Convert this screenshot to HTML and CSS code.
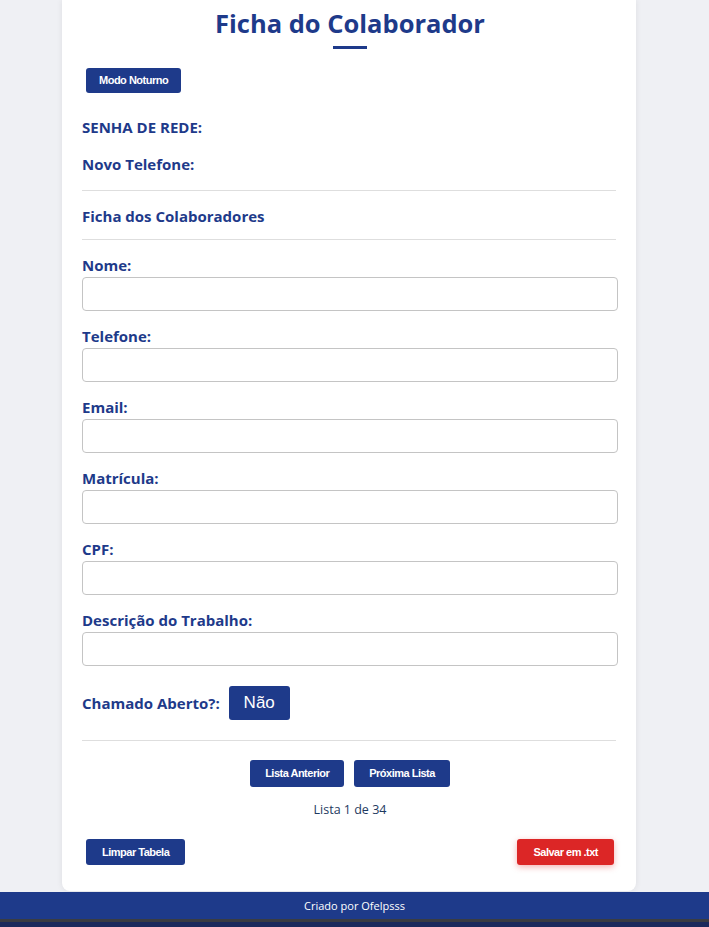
FILE: index.html
```html
<!DOCTYPE html>
<html lang="pt-BR">
<head>
<meta charset="utf-8">
<title>Ficha do Colaborador</title>
<link rel="stylesheet" href="styles.css">
</head>
<body>
<main class="card">
  <h1 class="title">Ficha do Colaborador</h1>
  <div class="title-bar"></div>
  <div class="top-actions">
    <button class="btn btn-small">Modo Noturno</button>
  </div>
  <p class="info">SENHA DE REDE:</p>
  <p class="info info-phone">Novo Telefone:</p>
  <hr class="divider">
  <h2 class="section">Ficha dos Colaboradores</h2>
  <hr class="divider divider-tight">
  <form class="form">
    <div class="field"><label>Nome:</label><input type="text"></div>
    <div class="field"><label>Telefone:</label><input type="text"></div>
    <div class="field"><label>Email:</label><input type="text"></div>
    <div class="field"><label>Matrícula:</label><input type="text"></div>
    <div class="field"><label>CPF:</label><input type="text"></div>
    <div class="field"><label>Descrição do Trabalho:</label><input type="text"></div>
    <div class="status">
      <span class="status-label">Chamado Aberto?:</span>
      <button type="button" class="btn btn-toggle">Não</button>
    </div>
  </form>
  <hr class="divider divider-bottom">
  <div class="pager">
    <button class="btn btn-page">Lista Anterior</button>
    <button class="btn btn-page">Próxima Lista</button>
  </div>
  <p class="pager-info">Lista 1 de 34</p>
  <div class="bottom-actions">
    <button class="btn btn-small btn-wide">Limpar Tabela</button>
    <button class="btn btn-small btn-red">Salvar em .txt</button>
  </div>
</main>
<footer class="footer">Criado por Ofelpsss</footer>
<div class="footer-strip"></div>
</body>
</html>
```
FILE: styles.css
```css
* { box-sizing: border-box; }
html, body { margin: 0; padding: 0; }
body {
  background: #eff0f4;
  font-family: "Open Sans", "Noto Sans", sans-serif;
  color: #1e3a8a;
}
.card {
  width: 574px;
  margin-left: 62px;
  background: #fff;
  border-radius: 0 0 8px 8px;
  box-shadow: 0 0 6px rgba(0,0,0,0.08);
  padding: 3px 18px 26px 20px;
}
.title {
  margin: 0;
  text-align: center;
  font-size: 25.5px;
  font-weight: 700;
  line-height: 40px;
  color: #1e3a8a;
}
.title-bar {
  width: 34px;
  height: 3px;
  background: #1e3a8a;
  margin: 3px auto 0;
}
.top-actions { margin-top: 18px; }
.btn {
  font-family: "Liberation Sans", Arial, sans-serif;
  font-weight: 700;
  color: #fff;
  background: #1e3a8a;
  border: none;
  border-radius: 3px;
  cursor: pointer;
}
.btn-small {
  font-size: 11px;
  letter-spacing: -0.5px;
  height: 25px;
  padding: 0 13px;
  margin-left: 4px;
}
.info {
  margin: 0;
  font-size: 15px;
  font-weight: 700;
  line-height: 20px;
}
.top-actions + .info { margin-top: 24px; }
.info-phone { margin-top: 17px; }
.divider {
  border: none;
  border-top: 1px solid #dedede;
  margin: 16px 2px 0 0;
}
.section {
  margin: 15px 0 0;
  font-size: 15px;
  font-weight: 700;
  line-height: 20px;
}
.divider-tight { margin-top: 13px; }
.form { margin-top: 15px; }
.field { display: flex; flex-direction: column; margin-bottom: 15px; }
.field label {
  font-size: 15px;
  font-weight: 700;
  line-height: 20px;
  margin-bottom: 2px;
}
.field input {
  width: 536px;
  height: 34px;
  border: 1px solid #c4c4c4;
  border-radius: 4px;
  background: #fff;
}
.status {
  display: flex;
  align-items: center;
  gap: 9px;
  margin-top: 20px;
}
.status-label {
  font-size: 15px;
  font-weight: 700;
}
.btn-toggle {
  font-weight: 400;
  font-size: 17px;
  height: 34px;
  width: 61px;
  border-radius: 3px;
}
.divider-bottom { margin-top: 20px; }
.pager {
  display: flex;
  justify-content: center;
  gap: 10px;
  margin-top: 19px;
}
.btn-page {
  font-size: 11px;
  letter-spacing: -0.5px;
  height: 27px;
  padding: 0 15px;
}
.pager-info {
  text-align: center;
  font-size: 12.5px;
  color: #1e3a5f;
  margin: 14px 0 0;
  line-height: 18px;
}
.bottom-actions {
  display: flex;
  justify-content: space-between;
  margin-top: 20px;
}
.bottom-actions .btn { height: 26px; }
.btn-wide { padding: 0 16px; }
.btn-red {
  background: #dc2626;
  margin-right: 4px;
  padding: 0 16px;
  box-shadow: 0 2px 6px rgba(220,38,38,0.35);
}
.footer {
  margin-top: 1px;
  background: #1e3a8a;
  color: #fff;
  text-align: center;
  font-size: 11px;
  line-height: 27px;
  height: 27px;
}
.footer-strip {
  height: 10px;
  background: #3a3c42;
  border-bottom: 7px solid #1b2a5c;
}
```
